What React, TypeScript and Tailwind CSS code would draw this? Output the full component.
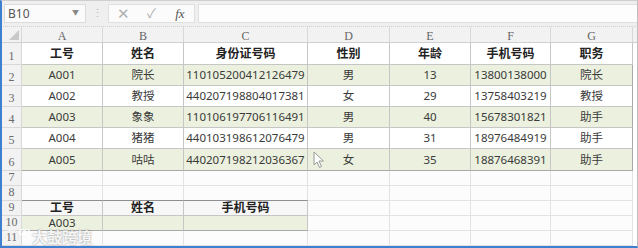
import React from "react";

const COLS = [81, 81, 124, 82, 81, 80, 82];
const LETTERS = ["A", "B", "C", "D", "E", "F", "G"];

const data = [
  ["A001", "院长", "110105200412126479", "男", "13", "13800138000", "院长"],
  ["A002", "教授", "440207198804017381", "女", "29", "13758403219", "教授"],
  ["A003", "象象", "110106197706116491", "男", "40", "15678301821", "助手"],
  ["A004", "猪猪", "440103198612076479", "男", "31", "18976484919", "助手"],
  ["A005", "咕咕", "440207198212036367", "女", "35", "18876468391", "助手"],
];
const header = ["工号", "姓名", "身份证号码", "性别", "年龄", "手机号码", "职务"];

const font = { fontFamily: '"Noto Sans", "Noto Sans CJK SC", sans-serif' };
const serif = { fontFamily: '"Liberation Serif", "DejaVu Serif", serif' };

function RowNum({ n, h }: { n: number; h: number }) {
  return (
    <div
      className="w-[20px] shrink-0 flex items-end justify-center bg-[#f2f2f2] border-r border-b border-[#d8d8d8] text-[12px] text-[#6b6b6b] leading-none pb-[2px]"
      style={{ ...serif, height: h }}
    >
      {n}
    </div>
  );
}

function Cell({
  w,
  children,
  className = "",
}: {
  w: number;
  children?: React.ReactNode;
  className?: string;
}) {
  return (
    <div
      className={`shrink-0 flex items-center justify-center leading-none ${className}`}
      style={{ width: w }}
    >
      {children}
    </div>
  );
}

export default function App() {
  const rowH = [22, 21, 21, 21, 21, 22];
  return (
    <div className="w-[638px] h-[248px] bg-white overflow-hidden relative" style={font}>
      <div className="absolute inset-0 border-l-2 border-b-2 border-[#3f7fd0] border-t border-t-[#cfcfcf] border-r border-r-[#bdbdbd] pointer-events-none z-20" />
      {/* formula bar */}
      <div className="h-[27px] bg-[#efefef] flex items-center pl-[4px] pt-[1px] border-b border-dotted border-[#d0d0d0]">
        <div className="w-[82px] h-[19px] bg-[#fbfbfb] border border-[#dcdcdc] flex items-center justify-between px-[3px] text-[12px] text-[#555]">
          <span>B10</span>
          <span className="text-[7px] text-[#888] mr-[3px]">▼</span>
        </div>
        <div className="w-[22px] flex justify-center text-[#b9b9b9] text-[11px]">⋮</div>
        <div className="w-[87px] h-[19px] bg-[#fbfbfb] border border-[#e0e0e0] flex items-center text-[#b0b0b0]">
          <span className="w-[29px] text-center text-[15px] font-light">✕</span>
          <span className="w-[29px] text-center text-[13px]">✓</span>
          <span className="w-[29px] text-center text-[13px] italic text-[#555]" style={serif}>
            fx
          </span>
        </div>
        <div className="ml-[3px] flex-1 h-[19px] bg-[#fdfdfd] border border-[#e0e0e0]" />
      </div>

      {/* column headers */}
      <div className="flex h-[16px] pl-[2px] bg-[#f2f2f2] border-b border-[#d0d0d0]">
        <div className="w-[20px] shrink-0 relative border-r border-[#d8d8d8]">
          <div
            className="absolute right-[2px] bottom-[2px] w-0 h-0 border-l-[10px] border-l-transparent border-b-[10px] border-b-[#c8c8c8]"
          />
        </div>
        {LETTERS.map((l, i) => (
          <Cell
            key={l}
            w={COLS[i]}
            className="border-r border-[#d8d8d8] text-[12px] text-[#666] pt-[2px]"
          >
            <span style={serif}>{l}</span>
          </Cell>
        ))}
      </div>

      {/* row 1 header */}
      <div className="pl-[2px]">
        <div className="flex">
          <RowNum n={1} h={rowH[0]} />
          {header.map((t, i) => (
            <Cell
              key={i}
              w={COLS[i]}
              className="border-r border-b border-[#c6c6c6] font-bold text-[12px] text-[#222] bg-white"
            >
              <span>{t}</span>
            </Cell>
          ))}
        </div>
        {data.map((row, r) => (
          <div className="flex" key={r}>
            <RowNum n={r + 2} h={rowH[r + 1]} />
            {row.map((t, i) => (
              <Cell
                key={i}
                w={COLS[i]}
                className={`border-r border-b ${r === 4 ? "border-b-[#a9a9a9]" : "border-b-[#c6c6c6]"} ${
                  i === 6 ? "border-r-[#a9a9a9]" : "border-r-[#c6c6c6]"
                } text-[11.5px] text-[#3a3a3a] ${r % 2 === 0 ? "bg-[#ebf1de]" : "bg-white"}`}
              >
                <span>{t}</span>
              </Cell>
            ))}
          </div>
        ))}
        {/* rows 7,8 */}
        {[7, 8].map((n) => (
          <div className="flex" key={n}>
            <RowNum n={n} h={15} />
            {COLS.map((w, i) => (
              <Cell key={i} w={w} className="border-r border-b border-[#e2e2e2] bg-[#fcfcfc]" />
            ))}
          </div>
        ))}
        {/* row 9 */}
        <div className="flex">
          <RowNum n={9} h={15} />
          {["工号", "姓名", "手机号码"].map((t, i) => (
            <Cell
              key={i}
              w={COLS[i]}
              className="border-r border-b border-t border-r-[#c6c6c6] border-b-[#c6c6c6] border-t-[#8f8f8f] -mt-px font-bold text-[12px] text-[#222] bg-[#f7f7f7]"
            >
              <span>{t}</span>
            </Cell>
          ))}
          {COLS.slice(3).map((w, i) => (
            <Cell key={i} w={w} className="border-r border-b border-[#e2e2e2] bg-[#fcfcfc]" />
          ))}
        </div>
        {/* row 10 */}
        <div className="flex">
          <RowNum n={10} h={15} />
          {["A003", "", ""].map((t, i) => (
            <Cell
              key={i}
              w={COLS[i]}
              className="border-r border-b border-r-[#c6c6c6] border-b-[#a9a9a9] text-[11.5px] text-[#3a3a3a] bg-[#ebf1de]"
            >
              <span>{t}</span>
            </Cell>
          ))}
          {COLS.slice(3).map((w, i) => (
            <Cell key={i} w={w} className="border-r border-b border-[#e2e2e2] bg-[#fcfcfc]" />
          ))}
        </div>
        {/* row 11 */}
        <div className="flex">
          <RowNum n={11} h={15} />
          {COLS.map((w, i) => (
            <Cell key={i} w={w} className="border-r border-b border-[#e2e2e2] bg-[#fcfcfc]" />
          ))}
        </div>
      </div>

      {/* mouse cursor */}
      <svg
        className="absolute left-[313px] top-[151px] z-10"
        width="12"
        height="18"
        viewBox="0 0 12 18"
      >
        <path
          d="M1 1 L1 14 L4 11 L6.5 16.5 L8.5 15.5 L6 10 L10.5 10 Z"
          fill="#fdfdfd"
          stroke="#9a9a9a"
          strokeWidth="1"
          strokeLinejoin="round"
        />
      </svg>

      {/* watermark */}
      <div className="absolute left-[4px] top-[226px] z-10 flex items-center gap-[2px] text-white/90 pointer-events-none"
        style={{ textShadow: "0 0 2px rgba(0,0,0,0.45)" }}>
        <svg width="26" height="20" viewBox="0 0 26 20">
          <circle cx="8" cy="10" r="6.5" fill="none" stroke="#ffffff" strokeOpacity="0.9" strokeWidth="2" />
          <circle cx="8" cy="10" r="6.5" fill="none" stroke="#000" strokeOpacity="0.2" strokeWidth="0.5" />
          <circle cx="18" cy="5" r="2.5" fill="none" stroke="#fff" strokeWidth="1.2" />
          <circle cx="23" cy="5" r="2.5" fill="none" stroke="#fff" strokeWidth="1.2" />
        </svg>
        <span className="text-[15px] font-bold tracking-[0px]">大鼓跨境</span>
      </div>
    </div>
  );
}
